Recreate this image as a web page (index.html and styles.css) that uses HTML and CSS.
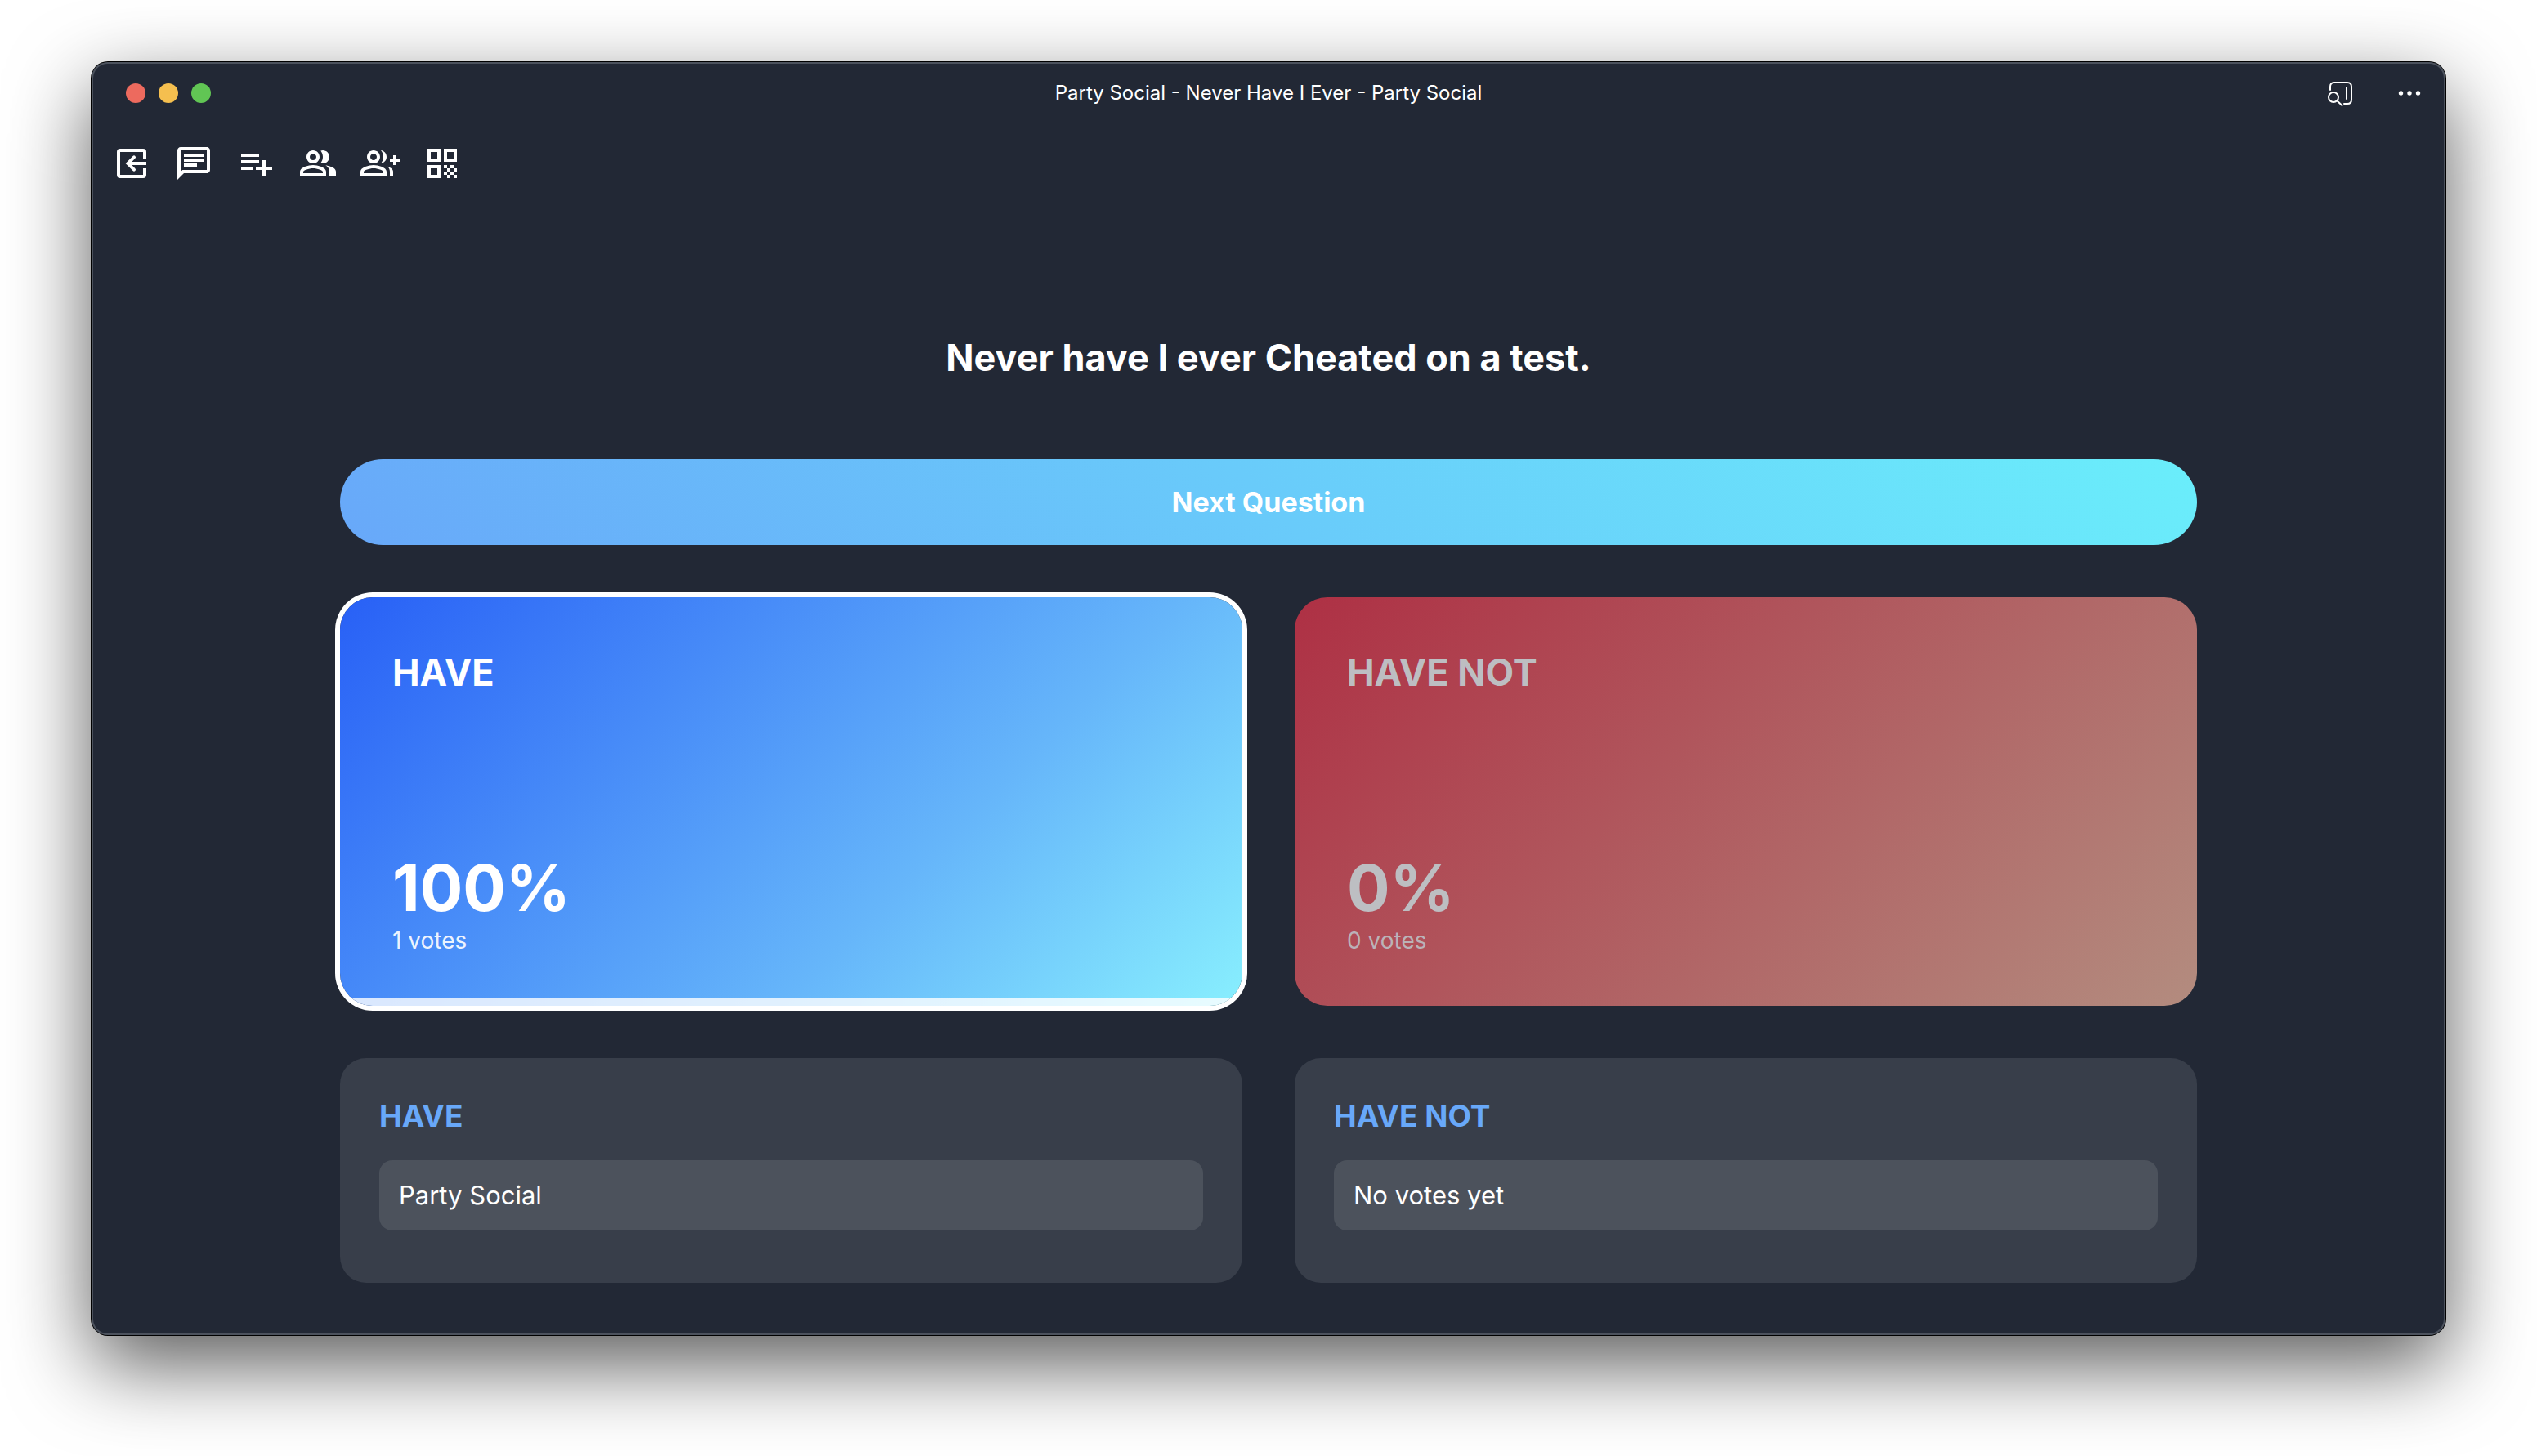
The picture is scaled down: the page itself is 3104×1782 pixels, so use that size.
FILE: index.html
```html
<!DOCTYPE html>
<html lang="en">
<head>
<meta charset="utf-8">
<title>Party Social - Never Have I Ever</title>
<link rel="stylesheet" href="styles.css">
</head>
<body>
<div class="window">
  <header class="titlebar">
    <div class="lights">
      <button class="light light-close" aria-label="Close"></button>
      <button class="light light-minimize" aria-label="Minimize"></button>
      <button class="light light-zoom" aria-label="Zoom"></button>
    </div>
    <div class="window-title">Party Social - Never Have I Ever - Party Social</div>
    <div class="window-actions">
      <button class="icon-button" aria-label="Search page">
        <svg class="icon-small" viewBox="0 0 36 36" fill="none" stroke="currentColor" stroke-width="2" stroke-linecap="round"><path d="M5 14V10q0-5 5-5h16q5 0 5 5v16q0 5-5 5h-4M25 11v14"/><circle cx="9" cy="23" r="6"/><path d="M13.500 27.500l6 5.500"/></svg>
      </button>
      <button class="icon-button" aria-label="More">
        <svg class="icon-small" viewBox="0 0 36 36" fill="currentColor"><circle cx="7.500" cy="18" r="2.700"/><circle cx="18" cy="18" r="2.700"/><circle cx="28.500" cy="18" r="2.700"/></svg>
      </button>
    </div>
  </header>
  <nav class="toolbar" aria-label="Game">
    <button class="icon-button" aria-label="Leave game"><svg class="icon" viewBox="0 0 24 24"><path d="M21 9V5a2 2 0 0 0-2-2H5a2 2 0 0 0-2 2v14a2 2 0 0 0 2 2h14a2 2 0 0 0 2-2v-4h-2v4H5V5h14v4z"/><path d="M13.500 8.200L9.700 12l3.800 3.800" fill="none" stroke="currentColor" stroke-width="2" stroke-linecap="round"/><path d="M10 11h11v2H10z"/></svg></button>
    <button class="icon-button" aria-label="Chat"><svg class="icon" viewBox="0 0 24 24"><path d="M4 4h16v12H5.170L4 17.170V4m0-2c-1.100 0-1.990.9-1.990 2L2 22l4-4h14c1.100 0 2-.9 2-2V4c0-1.100-.9-2-2-2H4zm2 10h8v2H6v-2zm0-3h12v2H6V9zm0-3h12v2H6V6z"/></svg></button>
    <button class="icon-button" aria-label="Add question"><svg class="icon" viewBox="0 0 24 24"><path d="M14 10H3v2h11v-2zm0-4H3v2h11V6zm4 8v-4h-2v4h-4v2h4v4h2v-4h4v-2h-4zM3 16h7v-2H3v2z"/></svg></button>
    <button class="icon-button" aria-label="Players"><svg class="icon" viewBox="0 0 24 24"><path d="M16.670 13.130C18.040 14.060 19 15.320 19 17v3h4v-3c0-2.180-3.570-3.470-6.330-3.870zM15 12c2.210 0 4-1.790 4-4s-1.790-4-4-4c-.47 0-.91.1-1.330.24C14.500 5.270 15 6.580 15 8s-.5 2.730-1.330 3.760c.42.14.86.24 1.330.24zM9 12c2.210 0 4-1.790 4-4s-1.790-4-4-4-4 1.790-4 4 1.790 4 4 4zm0-6c1.100 0 2 .9 2 2s-.9 2-2 2-2-.9-2-2 .9-2 2-2zM9 13c-2.670 0-8 1.340-8 4v3h16v-3c0-2.660-5.330-4-8-4zm6 5H3v-.99C3.200 16.290 6.300 15 9 15s5.800 1.290 6 2v1z"/></svg></button>
    <button class="icon-button" aria-label="Invite player"><svg class="icon" viewBox="0 0 24 24"><path d="M22 9V7h-2v2h-2v2h2v2h2v-2h2V9zM8 12c2.210 0 4-1.790 4-4s-1.790-4-4-4-4 1.790-4 4 1.790 4 4 4zm0-6c1.100 0 2 .9 2 2s-.9 2-2 2-2-.9-2-2 .9-2 2-2zM8 13c-2.670 0-8 1.340-8 4v3h16v-3c0-2.660-5.330-4-8-4zm6 5H2v-.99C2.200 16.290 5.300 15 8 15s5.800 1.290 6 2v1zM12.510 4.050C13.430 5.110 14 6.490 14 8s-.57 2.890-1.490 3.950C14.470 11.700 16 10.040 16 8s-1.530-3.700-3.490-3.950zM16.530 13.830C17.420 14.660 18 15.700 18 17v3h2v-3c0-1.450-1.590-2.510-3.470-3.170z"/></svg></button>
    <button class="icon-button" aria-label="Show QR code"><svg class="icon" viewBox="0 0 24 24"><path d="M3 11h8V3H3v8zm2-6h4v4H5V5zM3 21h8v-8H3v8zm2-6h4v4H5v-4zM13 3v8h8V3h-8zm6 6h-4V5h4v4zM19 19h2v2h-2zM13 13h2v2h-2zM15 15h2v2h-2zM13 17h2v2h-2zM15 19h2v2h-2zM17 17h2v2h-2zM17 13h2v2h-2zM19 15h2v2h-2z"/></svg></button>
  </nav>
  <main class="game">
    <h1 class="question">Never have I ever Cheated on a test.</h1>
    <button class="next">Next Question</button>
    <div class="columns">
      <button class="choice choice-have choice-selected">
        <span class="choice-name">HAVE</span>
        <span class="choice-percent">100%</span>
        <span class="choice-votes">1 votes</span>
        <span class="choice-bar" style="width: 100%"></span>
      </button>
      <button class="choice choice-have-not">
        <span class="choice-name">HAVE NOT</span>
        <span class="choice-percent">0%</span>
        <span class="choice-votes">0 votes</span>
        <span class="choice-bar" style="width: 0%"></span>
      </button>
    </div>
    <div class="columns">
      <section class="voters">
        <h2 class="voters-title">HAVE</h2>
        <ul class="voters-list"><li class="voter">Party Social</li></ul>
      </section>
      <section class="voters">
        <h2 class="voters-title">HAVE NOT</h2>
        <ul class="voters-list"><li class="voter">No votes yet</li></ul>
      </section>
    </div>
  </main>
</div>
</body>
</html>
```
FILE: styles.css
```css
* { box-sizing: border-box; }

body {
  display: flex;
  min-height: 100vh;
  margin: 0;
  padding: 76px 112px 148px;
  background: #fff;
  color: #fff;
  font: 31px/38px Inter, "Liberation Sans", sans-serif;
}

button {
  margin: 0;
  padding: 0;
  border: 0;
  background: none;
  color: inherit;
  font: inherit;
}

.window {
  flex: 1;
  min-width: 0;
  border-radius: 20px;
  background: #222835;
  box-shadow:
    inset 0 0 0 2px #4c525d,
    0 0 0 1px #000,
    0 36px 100px rgba(0, 0, 0, 0.65);
}

.titlebar {
  display: grid;
  grid-template-columns: 1fr auto 1fr;
  align-items: center;
  height: 76px;
  padding: 0 26px;
}

.lights { display: flex; gap: 16px; padding-left: 16px; }
.light { width: 24px; height: 24px; border-radius: 50%; }
.light-close { background: #ed6a5e; }
.light-minimize { background: #f5bf4f; }
.light-zoom { background: #61c554; }

.window-title { font-size: 24px; line-height: 32px; }

.window-actions { display: flex; justify-content: flex-end; gap: 48px; }
.icon-button { display: flex; }
.icon { width: 48px; height: 48px; fill: currentColor; }
.icon-small { width: 36px; height: 36px; }

.toolbar {
  display: flex;
  gap: 28px;
  padding: 24px 25px;
}

.game {
  display: flex;
  flex-direction: column;
  gap: 64px;
  max-width: 2400px;
  margin: 0 auto;
  padding: 162px 64px 64px;
}

.question {
  margin: 0;
  font-size: 45px;
  line-height: 56px;
  font-weight: 700;
  text-align: center;
}

.next {
  height: 105px;
  margin-top: 32px;
  border-radius: 53px;
  background: linear-gradient(45deg, #68a8f9, #6aeefb);
  font-size: 34px;
  font-weight: 700;
}

.columns {
  display: grid;
  grid-template-columns: 1fr 1fr;
  gap: 64px;
}

.choice {
  position: relative;
  display: flex;
  flex-direction: column;
  min-height: 500px;
  padding: 64px;
  border-radius: 40px;
  overflow: hidden;
  text-align: left;
}

.choice-have { background: linear-gradient(135deg, #2860f6, #66b6fa 65%, #88effe); }
.choice-have-not { background: linear-gradient(135deg, #ae3044, #b38c7f); color: #bdbec2; }
.choice-selected { box-shadow: 0 0 0 6px #fff; }

.choice-name {
  margin-bottom: auto;
  font-size: 45px;
  line-height: 56px;
  font-weight: 700;
}

.choice-percent { font-size: 78px; line-height: 96px; font-weight: 700; }
.choice-votes { font-size: 28px; line-height: 32px; opacity: 0.9; }

.choice-bar {
  position: absolute;
  bottom: 0;
  left: 0;
  height: 10px;
  background: rgba(255, 255, 255, 0.8);
}

.voters {
  padding: 48px 48px 64px;
  border-radius: 32px;
  background: #383e4a;
}

.voters-title {
  margin: 0 0 32px;
  color: #68a8f9;
  font-size: 37px;
  line-height: 45px;
  font-weight: 700;
}

.voters-list { margin: 0; padding: 0; list-style: none; }

.voter {
  padding: 24px;
  border-radius: 16px;
  background: #4c525c;
}
```
